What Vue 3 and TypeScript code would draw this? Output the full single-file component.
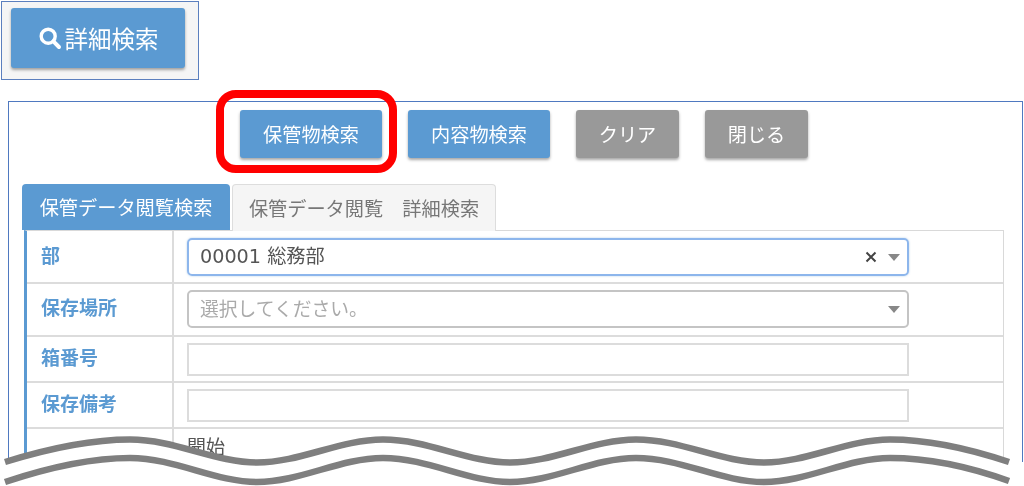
<script setup lang="ts">
const topButtons = [
  { label: '保管物検索', cls: 'btn-blue wide' },
  { label: '内容物検索', cls: 'btn-blue wide' },
  { label: 'クリア', cls: 'btn-gray' },
  { label: '閉じる', cls: 'btn-gray' },
];
const waveTop =
  'M5 462 C50 448 90 439.5 130 439.5 C175 439.5 215 462.5 257 462.5 C300 462.5 340 439.5 383 439.5 C428 439.5 468 462.5 510 462.5 C553 462.5 593 439.5 636 439.5 C681 439.5 721 462.5 764 462.5 C807 462.5 847 439.5 890 439.5 C930 439.5 970 449 1009 462';
const waveLow =
  'M5 482 C50 467 90 458 130 458 C175 458 215 482 257 482 C300 482 340 458 383 458 C428 458 468 482 510 482 C553 482 593 458 636 458 C681 458 721 482 764 482 C807 482 847 458 890 458 C930 458 970 467 1009 481';
const waveFill = `${waveTop} L1024 462 L1024 486 L0 486 L0 462 Z`;
</script>

<template>
  <div class="page">
    <div class="frame">
      <button class="btn btn-blue big">
        <svg class="search" width="24" height="24" viewBox="0 0 24 24" fill="none" stroke="#fff">
          <circle cx="10.2" cy="10.2" r="7" stroke-width="3.4" />
          <path d="M15.4 15.4 L21 21" stroke-width="4" stroke-linecap="round" />
        </svg>
        詳細検索
      </button>
    </div>

    <div class="panel">
      <div class="actions">
        <button v-for="b in topButtons" :key="b.label" class="btn" :class="b.cls">{{ b.label }}</button>
      </div>

      <div class="tabs">
        <div class="tab active">保管データ閲覧検索</div>
        <div class="tab">保管データ閲覧　詳細検索</div>
      </div>

      <div class="table">
        <div class="row r1">
          <div class="label">部</div>
          <div class="cell">
            <div class="select focus">
              <span class="text value">00001 総務部</span>
              <span class="clear">
                <svg width="12" height="12" viewBox="0 0 12 12" stroke="#444" stroke-width="2">
                  <path d="M1.5 1.5 L10.5 10.5 M10.5 1.5 L1.5 10.5" />
                </svg>
              </span>
              <span class="caret"></span>
            </div>
          </div>
        </div>
        <div class="row r1 second">
          <div class="label">保存場所</div>
          <div class="cell">
            <div class="select placeholder">
              <span class="text">選択してください。</span>
              <span class="caret"></span>
            </div>
          </div>
        </div>
        <div class="row r2">
          <div class="label">箱番号</div>
          <div class="cell"><div class="input"></div></div>
        </div>
        <div class="row r3">
          <div class="label">保存備考</div>
          <div class="cell"><div class="input"></div></div>
        </div>
        <div class="row r4">
          <div class="label"></div>
          <div class="cell start">開始</div>
        </div>
      </div>
    </div>

    <div class="highlight"></div>

    <svg class="wave" width="1024" height="486" viewBox="0 0 1024 486" fill="none">
      <path :d="waveFill" fill="#fff" />
      <path :d="waveTop" stroke="#7f7f7f" stroke-width="6.5" />
      <path :d="waveLow" stroke="#7f7f7f" stroke-width="6.5" />
    </svg>
  </div>
</template>

<style scoped>
.page {
  position: relative;
  width: 1024px;
  height: 486px;
  overflow: hidden;
  background: #fff;
  font-family: "Noto Sans CJK JP", "Liberation Sans", sans-serif;
  padding-top: 1px;
  box-sizing: border-box;
  filter: blur(0.35px);
}
.frame {
  width: 198px;
  height: 79px;
  margin-left: 1px;
  box-sizing: border-box;
  border: 1px solid #5b7fbe;
  background: #f5f5f5;
  padding: 6px 0 0 9px;
}
.btn {
  display: flex;
  align-items: center;
  justify-content: center;
  box-sizing: border-box;
  height: 48px;
  border: none;
  border-radius: 3px;
  padding: 0;
  color: #fff;
  font-family: inherit;
  font-size: 19.2px;
  box-shadow: 0 2px 3px rgba(0, 0, 0, 0.35);
}
.btn-blue {
  background: #5b9ad2;
}
.btn-gray {
  background: #999;
  width: 103px;
}
.wide {
  width: 142px;
}
.big {
  width: 174px;
  height: 60px;
  font-size: 23.5px;
  gap: 3px;
}
.search {
  flex: none;
}
.panel {
  margin: 21px 0 0 8px;
  width: 1015px;
  height: 380px;
  box-sizing: border-box;
  border: 1px solid #4f79c0;
  padding: 8px 18px 0 13px;
}
.actions {
  display: flex;
  gap: 26px;
  padding-left: 218px;
}
.tabs {
  display: flex;
  gap: 2px;
  margin-top: 26px;
  height: 46px;
}
.tab {
  box-sizing: border-box;
  height: 47px;
  width: 264px;
  padding-top: 8px;
  text-align: center;
  font-size: 19.2px;
  line-height: 30px;
  color: #777;
  background: #f5f5f5;
  border: 1px solid #ddd;
  border-bottom: none;
  border-radius: 4px 4px 0 0;
}
.tab.active {
  position: relative;
  z-index: 1;
  width: 208px;
  height: 46px;
  color: #fff;
  background: #5b9ad2;
  border: none;
}
.table {
  margin-left: 2px;
  border-left: 3px solid #5b9ad2;
  border-top: 1px solid #d9d9d9;
  border-right: 1px solid #d9d9d9;
}
.row {
  display: grid;
  grid-template-columns: 147px 1fr;
  box-sizing: border-box;
  border-bottom: 2px solid #dcdcdc;
}
.r1 {
  height: 53px;
}
.r2 {
  height: 46px;
}
.r3 {
  height: 46px;
}
.r4 {
  height: 70px;
  border-bottom: none;
}
.label {
  padding: 9px 0 0 14px;
  font-size: 19px;
  line-height: 30px;
  font-weight: 700;
  color: #5b9ad2;
  border-right: 2px solid #dcdcdc;
}
.second .label {
  padding-top: 8px;
}
.r2 .label {
  padding-top: 5px;
}
.r3 .label {
  padding-top: 5px;
}
.cell {
  padding: 7px 0 0 13px;
}
.second .cell {
  padding-top: 6px;
}
.r2 .cell {
  padding-top: 6px;
}
.r3 .cell {
  padding-top: 6px;
}
.select {
  display: flex;
  align-items: center;
  box-sizing: border-box;
  width: 722px;
  height: 38px;
  padding: 0 7px 0 11px;
  border: 2px solid #c4c4c4;
  border-radius: 5px;
  font-size: 18.8px;
  color: #555;
}
.select.focus {
  border-color: #8db6ec;
  box-shadow: 0 0 2px rgba(91, 154, 210, 0.5);
}
.select.placeholder {
  color: #aaa;
}
.text {
  margin-top: -4px;
}
.value {
  font-family: "DejaVu Sans", "Noto Sans CJK JP", sans-serif;
  font-size: 19.2px;
}
.clear {
  display: flex;
  margin-left: auto;
}
.clear + .caret {
  margin-left: 11px;
}
.caret {
  width: 0;
  height: 0;
  margin-left: auto;
  border-left: 6px solid transparent;
  border-right: 6px solid transparent;
  border-top: 7px solid #888;
}
.input {
  box-sizing: border-box;
  width: 722px;
  height: 33px;
  border: 2px solid #dcdcdc;
}
.start {
  font-size: 19px;
  line-height: 30px;
  padding-top: 2px;
  color: #555;
}
.highlight {
  position: absolute;
  left: 216px;
  top: 90px;
  width: 181px;
  height: 83px;
  box-sizing: border-box;
  border: 8px solid #f00;
  border-radius: 20px;
  pointer-events: none;
}
.wave {
  position: absolute;
  left: 0;
  top: 0;
  pointer-events: none;
}
</style>
